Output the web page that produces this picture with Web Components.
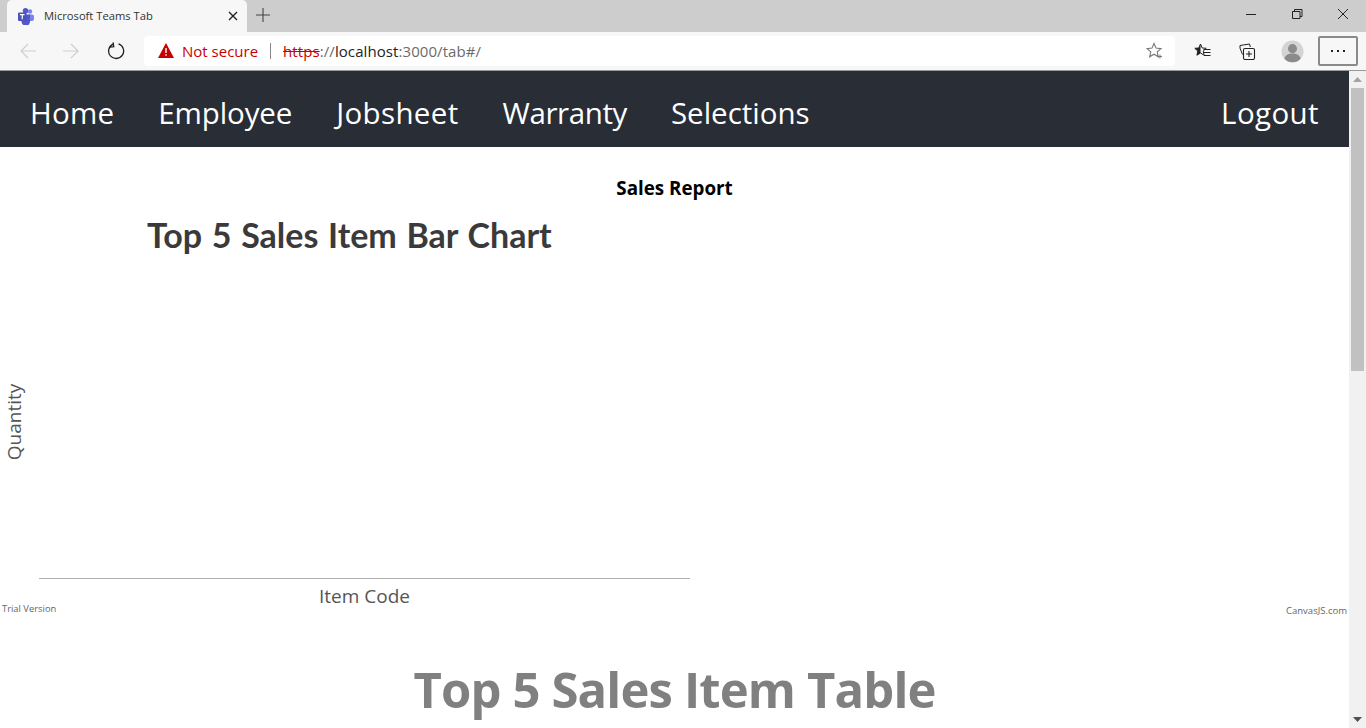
<!DOCTYPE html>
<html>
<head>
<meta charset="utf-8">
<title>Microsoft Teams Tab</title>
<style>
  html, body { margin: 0; padding: 0; height: 100%; overflow: hidden; background: #fff; }
  body { display: flex; flex-direction: column; width: 1366px; height: 728px; font-family: "Open Sans", sans-serif; }
</style>
</head>
<body>
<browser-tabs></browser-tabs>
<browser-toolbar></browser-toolbar>
<page-viewport>
  <app-nav></app-nav>
  <report-title>Sales Report</report-title>
  <bar-chart></bar-chart>
  <table-heading>Top 5 Sales Item Table</table-heading>
</page-viewport>

<script>
class BrowserTabs extends HTMLElement {
  constructor() {
    super();
    this.attachShadow({ mode: "open" });
    this.shadowRoot.innerHTML = `
      <style>
        :host { display: flex; height: 32px; background: #cdcdcd; flex: none; align-items: flex-end; }
        .tab {
          width: 240px; height: 32px; margin-left: 7px; background: #f7f7f7;
          border-radius: 5px 5px 0 0; display: flex; align-items: center; box-sizing: border-box;
          padding: 0 0 1px 10px; font: 11.200px "Open Sans", sans-serif; color: #333;
        }
        .tab span { margin-left: 9px; flex: 1; }
        .tab svg { flex: none; }
        .close { margin-right: 9px; }
        .plus { margin: 0 8px 10px 9px; }
        .win { margin-left: auto; display: flex; align-self: flex-start; }
        .win svg { width: 46px; height: 30px; display: block; }
      </style>
      <div class="tab">
        <svg width="18" height="18" viewBox="0 0 18 18">
          <circle cx="13" cy="4.500" r="2.200" fill="#7b83eb"/>
          <rect x="10" y="7.500" width="7" height="6.500" rx="2" fill="#7b83eb"/>
          <circle cx="8.500" cy="3.800" r="2.700" fill="#5059c9"/>
          <path d="M4.500 7.500h8.500v6.500a4.200 4.200 0 0 1-8.500 1z" fill="#5059c9"/>
          <rect x="1" y="5.500" width="8.500" height="8.500" rx="1" fill="#4b53bc"/>
          <path d="M3 7.600h4.500M5.250 7.600v4.600" stroke="#fff" stroke-width="1.200" fill="none"/>
        </svg>
        <span>Microsoft Teams Tab</span>
        <svg class="close" width="10" height="10" viewBox="0 0 10 10"><path d="M1 1l8 8M9 1l-8 8" stroke="#222" stroke-width="1.400"/></svg>
      </div>
      <svg class="plus" width="14" height="14" viewBox="0 0 14 14"><path d="M7 0v14M0 7h14" stroke="#444" stroke-width="1.100"/></svg>
      <div class="win">
        <svg viewBox="0 0 46 30"><path d="M18 14.500h10" stroke="#222" stroke-width="1"/></svg>
        <svg viewBox="0 0 46 30"><path d="M18.500 11.500h7.500v7h-7.500zM20.500 11.500v-2h7.500v7h-2" stroke="#222" stroke-width="1" fill="none"/></svg>
        <svg viewBox="0 0 46 30"><path d="M18 9l10 10M28 9l-10 10" stroke="#222" stroke-width="1"/></svg>
      </div>`;
  }
}
customElements.define("browser-tabs", BrowserTabs);

class BrowserToolbar extends HTMLElement {
  constructor() {
    super();
    this.attachShadow({ mode: "open" });
    this.shadowRoot.innerHTML = `
      <style>
        :host {
          display: flex; height: 39px; flex: none; background: #f7f7f7; box-sizing: border-box;
          border-bottom: 1px solid #9a9a9a; align-items: center; font: 15px "Open Sans", sans-serif;
        }
        svg { flex: none; display: block; }
        .nav { display: flex; align-items: center; gap: 27px; margin-left: 20px; width: 124px; }
        .url {
          width: 1031px; height: 30px; background: #fff; border-radius: 4px; display: flex;
          align-items: center; box-sizing: border-box; padding: 0 12px 0 14px; margin-bottom: 1px;
        }
        .warn { color: #c80000; margin-left: 8px; }
        .sep { width: 1px; height: 16px; background: #888; margin: 0 12px; }
        .addr { letter-spacing: .08px; }
        .scheme { color: #c80000; text-decoration: line-through; }
        .host { color: #222; }
        .rest { color: #6b6b6b; }
        .star { margin-left: auto; }
        .tools { display: flex; align-items: center; margin-left: 19px; gap: 28px; }
        .avatar { margin-left: -3px; }
        .more {
          width: 40px; height: 30px; box-sizing: border-box; border: 2px solid #8a8a8a; border-radius: 2px;
          display: flex; align-items: center; justify-content: center; margin-left: 14px; gap: 2px;
        }
        .more i { width: 2px; height: 2px; background: #222; margin: 0 1px; }
      </style>
      <div class="nav">
        <svg width="16" height="16" viewBox="0 0 16 16"><path d="M16 8H1M8 1L1 8l7 7" stroke="#cfcfcf" stroke-width="1.200" fill="none"/></svg>
        <svg width="16" height="16" viewBox="0 0 16 16"><path d="M0 8h15M8 1l7 7-7 7" stroke="#cfcfcf" stroke-width="1.200" fill="none"/></svg>
        <svg width="18" height="18" viewBox="0 0 18 18" style="margin-left:1px"><path d="M6 2.200A7.500 7.500 0 1 0 11.500 1.900" stroke="#222" stroke-width="1.300" fill="none"/><path d="M6.500 .5v4.200h-4" stroke="#222" stroke-width="1.300" fill="none" transform="rotate(-8 6 3)"/></svg>
      </div>
      <div class="url">
        <svg width="16" height="15" viewBox="0 0 16 15"><path d="M8 0l8 15H0z" fill="#c80000"/><path d="M8 5v5M8 11.200v1.600" stroke="#fff" stroke-width="1.400"/></svg>
        <span class="warn">Not secure</span>
        <span class="sep"></span>
        <span class="addr"><span class="scheme">https</span><span class="rest">://</span><span class="host">localhost</span><span class="rest">:3000/tab#/</span></span>
        <svg class="star" width="17" height="17" viewBox="0 0 17 17"><path d="M8 1.500l2 4.600 5 .5-3.800 3.300 1.100 4.900L8 12.200l-4.300 2.600 1.100-4.900L1 6.600l5-.5z" fill="none" stroke="#777" stroke-width="1.100"/><path d="M12 14.500h4M14 12.500v4" stroke="#777" stroke-width="1"/></svg>
      </div>
      <div class="tools">
        <svg width="17" height="17" viewBox="0 0 17 17"><path d="M6.500 1l1.700 4 4 .3-3 2.700.9 4.200-3.600-2.200-3.600 2.200.9-4.200-3-2.700 4-.3z" fill="#f7f7f7" stroke="#222" stroke-width="1"/><path d="M6.500 1L4.800 5l-4 .3 3 2.700-.9 4.200 3.600-2.200z" fill="#222"/><path d="M9.500 6.500h7M10 9.500h6.500M10 12.500h6.500" stroke="#222" stroke-width="1.100"/></svg>
        <svg width="17" height="17" viewBox="0 0 17 17"><path d="M3.500 11.500L1 5.200V2.500l9.500-1.500.8 3" fill="none" stroke="#222" stroke-width="1"/><rect x="4.500" y="5.500" width="11" height="11" rx="1.500" fill="#f7f7f7" stroke="#222" stroke-width="1.100"/><path d="M10 8v6M7 11h6" stroke="#222" stroke-width="1.100"/></svg>
        <svg class="avatar" width="23" height="23" viewBox="0 0 24 24"><circle cx="12" cy="12" r="11.500" fill="#d4d4d4"/><circle cx="12" cy="9" r="4.700" fill="#8b8b8b"/><path d="M3.500 19.500c1-4 4-5.500 8.500-5.500s7.500 1.500 8.500 5.500a11.500 11.500 0 0 1-17 0z" fill="#8b8b8b"/></svg>
      </div>
      <div class="more"><i></i><i></i><i></i></div>`;
  }
}
customElements.define("browser-toolbar", BrowserToolbar);

// page area: content column + scrollbar
class PageViewport extends HTMLElement {
  constructor() {
    super();
    this.attachShadow({ mode: "open" });
    this.shadowRoot.innerHTML = `
      <style>
        :host { display: flex; flex: 1; min-height: 0; }
        .content { flex: 1; min-width: 0; overflow: hidden; }
        .bar { width: 17px; flex: none; background: #f1f1f1; display: flex; flex-direction: column; align-items: center; }
        .arrow { height: 17px; width: 17px; display: flex; align-items: center; justify-content: center; flex: none; }
        .thumb { width: 13px; height: 283px; background: #c1c1c1; flex: none; }
        .gap { flex: 1; }
      </style>
      <div class="content"><slot></slot></div>
      <div class="bar">
        <div class="arrow"><svg width="9" height="5" viewBox="0 0 9 5"><path d="M4.500 0L9 5H0z" fill="#a3a3a3"/></svg></div>
        <div class="thumb"></div>
        <div class="gap"></div>
        <div class="arrow"><svg width="9" height="5" viewBox="0 0 9 5"><path d="M0 0h9L4.500 5z" fill="#505050"/></svg></div>
      </div>`;
  }
}
customElements.define("page-viewport", PageViewport);

class AppNav extends HTMLElement {
  constructor() {
    super();
    this.attachShadow({ mode: "open" });
    const links = [["Home", 0.2], ["Employee", -0.1], ["Jobsheet", 0.35], ["Warranty", -0.4], ["Selections", 0]];
    this.shadowRoot.innerHTML = `
      <style>
        :host {
          display: flex; height: 76px; background: #282d36; color: #fff; align-items: center;
          box-sizing: border-box; padding: 6px 30px 0; font: 29.500px "Open Sans", sans-serif;
        }
        nav { display: flex; gap: 44px; flex: 1; }
        .logout { letter-spacing: .4px; }
      </style>
      <nav>${links.map(([l, s]) => `<span style="letter-spacing:${s}px">${l}</span>`).join("")}</nav>
      <span class="logout">Logout</span>`;
  }
}
customElements.define("app-nav", AppNav);

class ReportTitle extends HTMLElement {
  constructor() {
    super();
    this.attachShadow({ mode: "open" });
    this.shadowRoot.innerHTML = `
      <style>
        :host { display: block; text-align: center; font: bold 18.800px "Open Sans", sans-serif; color: #000; line-height: 25px; padding-top: 29px; }
      </style>
      <slot></slot>`;
  }
}
customElements.define("report-title", ReportTitle);

// the chart is a free canvas, its labels sit at fixed spots like on the canvasjs one
class BarChart extends HTMLElement {
  constructor() {
    super();
    this.attachShadow({ mode: "open" });
    this.shadowRoot.innerHTML = `
      <style>
        :host { display: block; position: relative; height: 417px; font-family: "Open Sans", sans-serif; color: #3a3a3a; }
        div { position: absolute; white-space: nowrap; }
        .title { left: 147px; top: 11px; font: bold 34px/46px Lato, sans-serif; word-spacing: 1.400px; }
        .ytitle { left: 13.500px; top: 221px; font-size: 19px; color: #555; transform: translate(-50%, -50%) rotate(-90deg); }
        .axis { left: 39px; top: 377px; width: 651px; height: 1px; background: #b0b0b0; }
        .xtitle { left: 319px; top: 382px; font-size: 19px; color: #555; line-height: 26px; }
        .trial { left: 2px; top: 401px; font-size: 9.400px; color: #666; line-height: 13px; }
        .credit { right: 2px; top: 403px; font-size: 9.500px; color: #666; line-height: 13px; }
      </style>
      <div class="title">Top 5 Sales Item Bar Chart</div>
      <div class="ytitle">Quantity</div>
      <div class="axis"></div>
      <div class="xtitle">Item Code</div>
      <div class="trial">Trial Version</div>
      <div class="credit">CanvasJS.com</div>`;
  }
}
customElements.define("bar-chart", BarChart);

class TableHeading extends HTMLElement {
  constructor() {
    super();
    this.attachShadow({ mode: "open" });
    this.shadowRoot.innerHTML = `
      <style>
        :host { display: block; text-align: center; font: bold 49px "Open Sans", sans-serif; letter-spacing: -.85px; color: #808080; line-height: 66px; padding-top: 38px; }
      </style>
      <slot></slot>`;
  }
}
customElements.define("table-heading", TableHeading);
</script>
</body>
</html>
